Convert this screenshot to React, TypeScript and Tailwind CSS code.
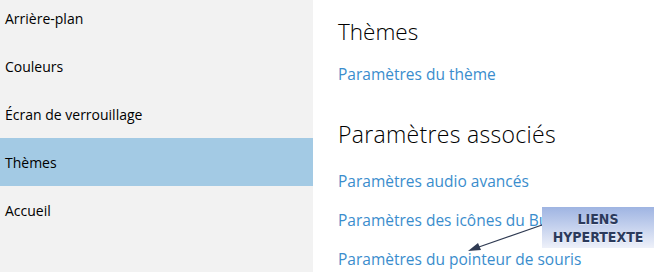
const navItems = ['Arrière-plan', 'Couleurs', 'Écran de verrouillage', 'Thèmes', 'Accueil'];

const links = ['Paramètres audio avancés', 'Paramètres des icônes du Bureau', 'Paramètres du pointeur de souris'];

const font = { fontFamily: '"Open Sans", "Noto Sans", sans-serif' };

export default function App() {
  return (
    <div className="relative flex h-[272px] w-[654px] overflow-hidden bg-white" style={font}>
      <nav className="flex w-[313px] shrink-0 flex-col bg-[#f2f2f2]">
        <div className="-mt-[6px] flex flex-col">
          {navItems.map((item) => (
            <div
              key={item}
              className={`flex h-[48px] items-center px-[5px] text-[14px] text-black ${item === 'Thèmes' ? 'bg-[#a3cae4]' : ''}`}
            >
              {item}
            </div>
          ))}
        </div>
      </nav>

      <main className="flex flex-1 flex-col pl-[25px]">
        <h1 className="mt-[17px] text-[22.5px] font-light leading-[30px] text-black">Thèmes</h1>
        <a className="mt-[17px] text-[15.5px] leading-[20px] text-[#3a8dcd]">Paramètres du thème</a>
        <h2 className="mt-[35px] text-[23px] font-light leading-[30px] tracking-[0.3px] text-black">Paramètres associés</h2>
        <div className="mt-[22px] flex flex-col gap-[19px]">
          {links.map((l) => (
            <a key={l} className="whitespace-nowrap text-[15.5px] leading-[20px] text-[#3a8dcd]">
              {l}
            </a>
          ))}
        </div>
      </main>

      {/* annotation */}
      <svg className="absolute left-0 top-0" width="654" height="272">
        <line x1="542" y1="225" x2="476" y2="248" stroke="#2f3a52" strokeWidth="1.2" />
        <polygon points="468,251 478,243 481,250" fill="#2f3a52" />
      </svg>
      <div
        className="absolute left-[542px] top-[207px] flex h-[41px] w-[112px] flex-col items-center justify-center bg-gradient-to-b from-[#9fb4e2] to-[#eef1f9] text-[14px] font-bold leading-[18px] text-[#2b3a5c] [text-shadow:0_1px_0_rgba(255,255,255,0.5)]"
        style={{ fontFamily: '"DejaVu Sans Condensed", "DejaVu Sans", sans-serif', fontStretch: 'condensed' }}
      >
        <span>LIENS</span>
        <span>HYPERTEXTE</span>
      </div>
    </div>
  );
}
